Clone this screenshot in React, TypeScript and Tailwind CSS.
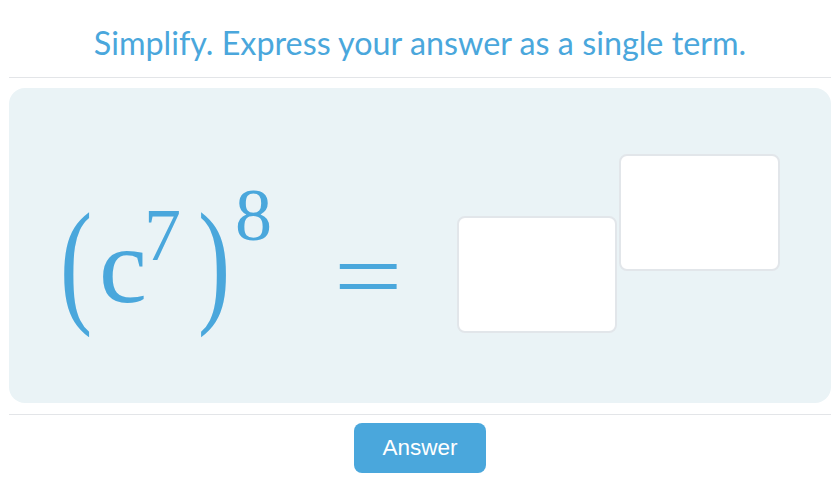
export default function App() {
  return (
    <div className="w-[840px] h-[501px] bg-white overflow-hidden">
      <div className="mx-[9px] h-[78px] border-b border-[#e3e5e8] flex items-center justify-center pt-[10px]">
        <h1 className="font-['Lato'] text-[32.3px] text-[#4aa7dc]">
          Simplify. Express your answer as a single term.
        </h1>
      </div>

      <div className="mx-[9px] mt-[10px] h-[315px] rounded-2xl bg-[#eaf3f6] flex items-start">
        <div className="w-[250px] shrink-0 ml-[44px] mt-[90px] font-['Liberation_Serif'] text-[108px] leading-none text-[#4aa7dc] whitespace-nowrap">
          <span className="inline-block text-[138px] align-[-6px] scale-x-[0.7]">(</span>
          <span>c</span>
          <span className="ml-[-3px] text-[74px] align-[42px]">7</span>
          <span className="inline-block ml-[10px] text-[138px] align-[-6px] scale-x-[0.7]">)</span>
          <span className="ml-[-2px] text-[74px] align-[62px]">8</span>
        </div>
        <div className="ml-[37px] mt-[139px] inline-block scale-x-[1.22] font-['Liberation_Serif'] text-[100px] leading-none text-[#4aa7dc]">
          =
        </div>
        <div className="ml-[61px] mt-[66px] flex items-start">
          <div className="mt-[62px] w-[160px] h-[117px] rounded-lg border-2 border-[#e2e6ea] bg-white" />
          <div className="ml-[2px] w-[161px] h-[117px] rounded-lg border-2 border-[#e2e6ea] bg-white" />
        </div>
      </div>

      <div className="mx-[9px] mt-[11px] border-t border-[#e3e5e8] flex justify-center pt-[8px]">
        <button className="w-[132px] h-[50px] rounded-lg bg-[#4aa7dc] text-white font-['Liberation_Sans'] text-[22.5px]">
          Answer
        </button>
      </div>
    </div>
  );
}
